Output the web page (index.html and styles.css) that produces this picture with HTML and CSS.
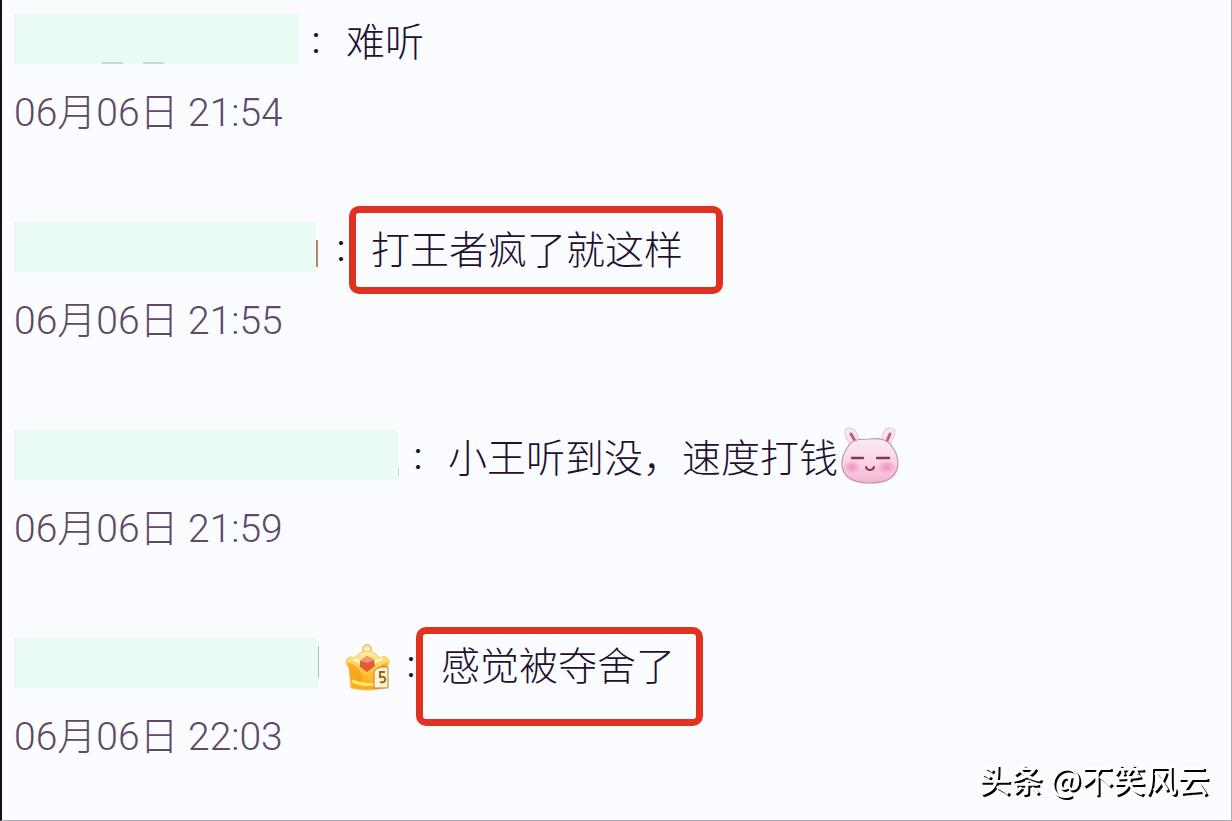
FILE: index.html
```
<!DOCTYPE html>
<html lang="zh-CN">
<head>
  <meta charset="UTF-8">
  <meta name="viewport" content="width=device-width, initial-scale=1.0">
  <title>评论</title>
  <link rel="stylesheet" href="styles.css">
</head>
<body>
  <main class="comments">
    <article class="comment">
      <div class="line">
        <span class="name name-1"><i class="dash dash-a"></i><i class="dash dash-b"></i></span>
        <span class="colon">：</span>
        <span class="text">难听</span>
      </div>
      <time class="time" datetime="06-06T21:54">06月06日 21:54</time>
    </article>

    <article class="comment">
      <div class="line">
        <span class="name name-2"></span>
        <span class="colon">：</span>
        <span class="text marked">打王者疯了就这样</span>
      </div>
      <time class="time" datetime="06-06T21:55">06月06日 21:55</time>
    </article>

    <article class="comment">
      <div class="line">
        <span class="name name-3"></span>
        <span class="colon">：</span>
        <span class="text">小王听到没，速度打钱</span>
        <svg class="bunny" viewBox="0 0 60 60">
          <defs>
            <linearGradient id="face" x1="0" y1="0" x2="0" y2="1">
              <stop offset="0" stop-color="#fbeaf6"/>
              <stop offset="0.55" stop-color="#f9d3e6"/>
              <stop offset="1" stop-color="#f3b4d2"/>
            </linearGradient>
            <radialGradient id="cheek">
              <stop offset="0" stop-color="#f58fb2"/>
              <stop offset="1" stop-color="#f58fb2" stop-opacity="0"/>
            </radialGradient>
          </defs>
          <path d="M10 18C3 10 4 3 9 3c6 0 9 6 10 13M42 15C42 7 46 2 51 3c6 1 5 9-2 16" fill="#fae7f2" stroke="#e8c8da" stroke-width="1.2"/>
          <path d="M11 9l4 7M50 9l-3 7" stroke="#c65a89" stroke-width="3" stroke-linecap="round"/>
          <path d="M30 14C40 13 48 14 53 23C57 29 59 37 57 44C54 54 43 58 30 58C16 58 6 54 3 45C0 37 4 27 9 20C14 14 21 14 30 14Z" fill="url(#face)" stroke="#b898ad" stroke-width="1.2"/>
          <ellipse cx="12" cy="42" rx="9" ry="7" fill="url(#cheek)"/>
          <ellipse cx="47" cy="42" rx="10" ry="7" fill="url(#cheek)"/>
          <path d="M12 33h11M37 33h12" stroke="#8f3155" stroke-width="2.4" stroke-linecap="round"/>
          <path d="M26 42c1 4 7 4 8 0" fill="none" stroke="#8f3155" stroke-width="2" stroke-linecap="round"/>
        </svg>
      </div>
      <time class="time" datetime="06-06T21:59">06月06日 21:59</time>
    </article>

    <article class="comment">
      <div class="line">
        <span class="name name-4"></span>
        <svg class="crown" viewBox="0 0 46 48">
          <defs>
            <linearGradient id="gold" x1="0" y1="0" x2="0" y2="1">
              <stop offset="0" stop-color="#fff0a8"/>
              <stop offset="0.5" stop-color="#ffc83d"/>
              <stop offset="1" stop-color="#fba51c"/>
            </linearGradient>
          </defs>
          <circle cx="22" cy="6" r="4" fill="#fff3ca" stroke="#edc878" stroke-width="2"/>
          <path d="M1 19c0-5 5-6 8-4l6-5q7-4 14 0l6 5c4-3 9-1 9 4 0 3-2 4-3 6l-2 20q-16 4-33 0L4 25c-2-2-3-3-3-6z" fill="url(#gold)" stroke="#f5c25a"/>
          <path d="M3 19q10 3 15 14 2 7-8 7l-4-3zM43 19q-9 3-14 11l10 2z" fill="#f39a16" opacity=".65"/>
          <path d="M9 16q6 2 10 7M37 16q-5 1-9 5" fill="none" stroke="#fff6c5" stroke-width="3"/>
          <path d="M7 38q12 5 22 3" fill="none" stroke="#ffe565" stroke-width="3"/>
          <path d="M15 18l7-5 7 4 1 6-8 6-7-5z" fill="#e65a3c"/>
          <path d="M16 18l6 2 7-3-7-4z" fill="#f4937c"/>
          <path d="M29 29q2-4 6-5h8v21H29z" fill="#fff2cc" stroke="#bd7d35"/>
          <path d="M40 29h-5v5c7-2 7 7 0 5" fill="none" stroke="#9d6424" stroke-width="2"/>
        </svg>
        <span class="colon">：</span>
        <span class="text marked marked-tall">感觉被夺舍了</span>
      </div>
      <time class="time" datetime="06-06T22:03">06月06日 22:03</time>
    </article>
  </main>

  <div class="watermark">头条 @不笑风云</div>
</body>
</html>
```
FILE: styles.css
```
* {
  box-sizing: border-box;
}

body {
  margin: 0;
  min-height: 100vh;
  border-left: 2px solid #14101f;
  border-right: 1px solid #a9adb8;
  border-bottom: 1px solid #a9adb8;
  background: #fbfcff;
  color: #22102e;
  font-family: Roboto, "Noto Sans CJK SC", sans-serif;
  font-size: 39px;
  font-weight: 300;
}

.comments {
  display: flex;
  flex-direction: column;
  gap: 84px;
  padding: 14px 12px 0;
}

.line {
  display: flex;
  align-items: center;
  height: 50px;
  margin-bottom: 24px;
  white-space: nowrap;
}

/* covered user names */
.name {
  position: relative;
  flex: none;
  height: 50px;
  background: #e9fbf3;
}

.name-1 {
  width: 285px;
  margin-right: 9px;
}

.name-2 {
  width: 302px;
  margin-right: 17px;
}

.name-3 {
  width: 384px;
  margin-right: 12px;
}

.name-4 {
  width: 304px;
  margin-right: 27px;
}

.name-2::after,
.name-3::after,
.name-4::after {
  content: "";
  position: absolute;
  left: 100%;
  top: 18px;
  width: 2px;
  height: 27px;
  background: #bd8163;
}

.name-3::after {
  top: 38px;
  width: 1px;
  height: 8px;
  background: #c9d2d2;
}

.name-4::after {
  top: 8px;
  width: 1px;
  height: 32px;
  background: #b5bcba;
}

.dash {
  position: absolute;
  top: 48px;
  width: 21px;
  height: 2px;
  background: #cbd8d4;
}

.dash-a {
  left: 88px;
}

.dash-b {
  left: 129px;
}

.colon,
.text {
  font-family: "Noto Sans CJK SC", sans-serif;
  line-height: 50px;
}

.colon {
  flex: none;
  width: 38px;
  font-size: 32px;
}

/* red frame around a comment */
.marked {
  position: relative;
}

.marked::after {
  content: "";
  position: absolute;
  top: -16px;
  bottom: -22px;
  left: -22px;
  right: -40px;
  border: 7px solid #e03220;
  border-radius: 10px;
}

.marked-tall::after {
  top: -11px;
  bottom: -38px;
  left: -25px;
  right: -28px;
}

.bunny {
  width: 60px;
  height: 60px;
  margin-left: 2px;
}

.crown {
  width: 46px;
  height: 48px;
  margin: 8px 12px 0 0;
}

.time {
  display: block;
  color: #5d4a68;
  line-height: 50px;
}

.watermark {
  position: fixed;
  right: 23px;
  bottom: 20px;
  color: #fff;
  font-family: "Noto Sans CJK SC", sans-serif;
  font-size: 32px;
  font-weight: 500;
  line-height: 46px;
  text-shadow: 2px 2px 0 #000;
}
```
